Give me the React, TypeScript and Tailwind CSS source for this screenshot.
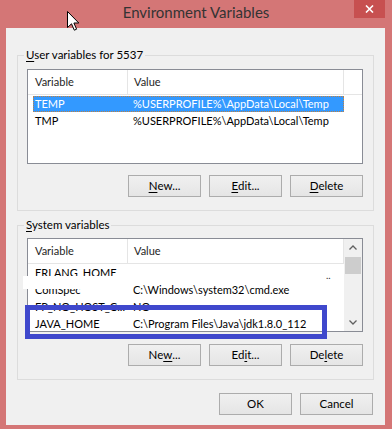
import React from "react";

function Btn({ children, className = "" }: { children: React.ReactNode; className?: string }) {
  return (
    <div
      className={
        "w-[73px] h-[22px] border border-[#acacac] bg-linear-to-b from-[#f0f0f0] to-[#e5e5e5] flex items-center justify-center text-[11.5px] text-black leading-none " +
        className
      }
    >
      {children}
    </div>
  );
}

function Header({ scroll }: { scroll?: boolean }) {
  return (
    <div className="flex h-[25px] border-b border-[#e5e5e5] text-[#1e1e1e]">
      <div className="w-[100px] border-r border-[#e5e5e5] pl-[7px] flex items-center">Variable</div>
      <div className="w-[216px] border-r border-[#e5e5e5] pl-[6px] flex items-center">Value</div>
      {!scroll && <div className="flex-1" />}
    </div>
  );
}

function Row({ name, value, selected }: { name: string; value: string; selected?: boolean }) {
  return (
    <div className="h-[17px] flex items-center">
      <div
        className={
          "ml-[5px] w-[311px] h-[16px] flex items-center whitespace-nowrap overflow-hidden " +
          (selected ? "bg-[#3399ff] text-white outline outline-1 outline-dotted outline-[#c08040] -outline-offset-1" : "text-black")
        }
      >
        <div className="w-[94px] pl-[2px] overflow-hidden">{name}</div>
        <div className="pl-[6px]">{value}</div>
      </div>
    </div>
  );
}

export default function App() {
  return (
    <div className="relative w-[392px] h-[429px] overflow-hidden bg-[#d47676] font-['Lato',sans-serif] text-[11px]">
      {/* Title bar */}
      <div className="relative h-[28px] flex justify-center pt-[2px]">
        <span className="text-[15px] leading-[20px] text-[#333333]">Environment Variables</span>
        <div className="absolute right-[7px] top-0 w-[31px] h-[18px] bg-[#c75050] flex items-center justify-center">
          <svg width="9" height="8" viewBox="0 0 9 8">
            <path d="M1 0.5 L8 7.5 M8 0.5 L1 7.5" stroke="white" strokeWidth="1.6" />
          </svg>
        </div>
      </div>

      {/* Client area */}
      <div className="ml-[6px] w-[379px] h-[397px] bg-[#f0f0f0] px-[11px] pt-[19px] leading-[16px]">
        <fieldset className="border border-[#dcdcdc] pl-[9px] pr-[10px] pt-[6px] pb-[13px] min-w-0">
          <legend className="-ml-[3px] px-[2px] leading-[16px] text-[11.5px] text-black">
            <span className="underline underline-offset-2">U</span>ser variables for 5537
          </legend>
          <div className="h-[95px] border border-[#898c95] bg-white overflow-hidden">
            <Header />
            <Row name="TEMP" value="%USERPROFILE%\AppData\Local\Temp" selected />
            <Row name="TMP" value="%USERPROFILE%\AppData\Local\Temp" />
          </div>
          <div className="mt-[11px] flex justify-end gap-[8px]">
            <Btn>
              <span className="underline underline-offset-2">N</span>ew...
            </Btn>
            <Btn>
              <span className="underline underline-offset-2">E</span>dit...
            </Btn>
            <Btn>
              <span className="underline underline-offset-2">D</span>elete
            </Btn>
          </div>
        </fieldset>

        <fieldset className="mt-[6px] border border-[#dcdcdc] pl-[9px] pr-[10px] pt-[5px] pb-[13px] min-w-0">
          <legend className="-ml-[3px] px-[2px] leading-[16px] text-[11.5px] text-black">
            <span className="underline underline-offset-2">S</span>ystem variables
          </legend>
          <div className="h-[94px] border border-[#898c95] bg-white overflow-hidden flex">
            <div className="w-[316px]">
              <Header scroll />
              <Row name="ERLANG_HOME" value="" />
              <Row name="ComSpec" value="C:\Windows\system32\cmd.exe" />
              <Row name="FP_NO_HOST_C..." value="NO" />
              <Row name="JAVA_HOME" value="C:\Program Files\Java\jdk1.8.0_112" />
            </div>
            <div className="w-[18px] bg-[#f0f0f0] flex flex-col items-center">
              <div className="h-[17px] w-full flex items-center justify-center">
                <svg width="8" height="5" viewBox="0 0 8 5">
                  <path d="M0.5 4.5 L4 1 L7.5 4.5" fill="none" stroke="#606060" strokeWidth="1.3" />
                </svg>
              </div>
              <div className="mt-[1px] w-[16px] h-[17px] bg-[#cdcdcd]" />
              <div className="flex-1" />
              <div className="h-[17px] w-full flex items-center justify-center">
                <svg width="8" height="5" viewBox="0 0 8 5">
                  <path d="M0.5 0.5 L4 4 L7.5 0.5" fill="none" stroke="#606060" strokeWidth="1.3" />
                </svg>
              </div>
            </div>
          </div>
          <div className="mt-[12px] flex justify-end gap-[8px]">
            <Btn>
              Ne<span className="underline underline-offset-2">w</span>...
            </Btn>
            <Btn>
              Ed<span className="underline underline-offset-2">i</span>t...
            </Btn>
            <Btn>
              De<span className="underline underline-offset-2">l</span>ete
            </Btn>
          </div>
        </fieldset>

        <div className="mt-[13px] flex justify-end gap-[8px] pr-[1px]">
          <Btn className="border-[#3c9bea]">OK</Btn>
          <Btn>Cancel</Btn>
        </div>
      </div>

      {/* Erased smudges (image edits) */}
      <div className="absolute left-[23px] top-[276px] w-[307px] h-[9px] bg-white" />
      <div className="absolute left-[23px] top-[285px] w-[104px] h-[4px] bg-white" />
      <div className="absolute left-[130px] top-[264px] w-[180px] h-[12px] bg-white" />
      <div className="absolute left-[326px] top-[270px] text-[10px] leading-[10px] text-[#333]">..</div>

      {/* Annotation rectangle */}
      <div className="absolute left-[25px] top-[305px] w-[302px] h-[34px] border-[5px] border-[#3f48cc]" />

      {/* Mouse cursor */}
      <svg className="absolute left-[67px] top-[11px]" width="13" height="21" viewBox="0 0 13 21">
        <path
          d="M0.5 0.5 L0.5 16.5 L4.5 12.8 L7.3 19.2 L9.6 18.2 L6.9 12 L11.8 12 Z"
          fill="white"
          stroke="black"
          strokeWidth="1"
          strokeLinejoin="miter"
        />
      </svg>
    </div>
  );
}
